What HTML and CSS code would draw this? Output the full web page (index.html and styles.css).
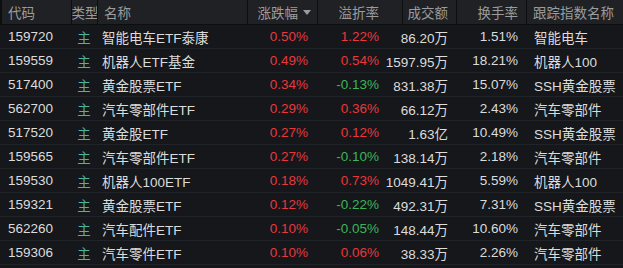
FILE: index.html
```html
<!DOCTYPE html>
<html lang="zh-CN">
<head>
  <meta charset="UTF-8">
  <title>ETF 列表</title>
  <link rel="stylesheet" href="styles.css">
</head>
<body>
<div class="quote-table">
  <div class="row head">
    <div class="cell">代码</div>
    <div class="cell type">类型</div>
    <div class="cell name">名称</div>
    <div class="cell right chg">涨跌幅<span class="sort"></span></div>
    <div class="cell right prem">溢折率</div>
    <div class="cell right">成交额</div>
    <div class="cell right">换手率</div>
    <div class="cell">跟踪指数名称</div>
  </div>
  <div class="row"><div class="cell">159720</div><div class="cell type">主</div><div class="cell name">智能电车ETF泰康</div><div class="cell right chg up">0.50%</div><div class="cell right prem up">1.22%</div><div class="cell right">86.20万</div><div class="cell right">1.51%</div><div class="cell">智能电车</div></div>
  <div class="row"><div class="cell">159559</div><div class="cell type">主</div><div class="cell name">机器人ETF基金</div><div class="cell right chg up">0.49%</div><div class="cell right prem up">0.54%</div><div class="cell right">1597.95万</div><div class="cell right">18.21%</div><div class="cell">机器人100</div></div>
  <div class="row"><div class="cell">517400</div><div class="cell type">主</div><div class="cell name">黄金股票ETF</div><div class="cell right chg up">0.34%</div><div class="cell right prem down">-0.13%</div><div class="cell right">831.38万</div><div class="cell right">15.07%</div><div class="cell">SSH黄金股票</div></div>
  <div class="row"><div class="cell">562700</div><div class="cell type">主</div><div class="cell name">汽车零部件ETF</div><div class="cell right chg up">0.29%</div><div class="cell right prem up">0.36%</div><div class="cell right">66.12万</div><div class="cell right">2.43%</div><div class="cell">汽车零部件</div></div>
  <div class="row"><div class="cell">517520</div><div class="cell type">主</div><div class="cell name">黄金股ETF</div><div class="cell right chg up">0.27%</div><div class="cell right prem up">0.12%</div><div class="cell right">1.63亿</div><div class="cell right">10.49%</div><div class="cell">SSH黄金股票</div></div>
  <div class="row"><div class="cell">159565</div><div class="cell type">主</div><div class="cell name">汽车零部件ETF</div><div class="cell right chg up">0.27%</div><div class="cell right prem down">-0.10%</div><div class="cell right">138.14万</div><div class="cell right">2.18%</div><div class="cell">汽车零部件</div></div>
  <div class="row"><div class="cell">159530</div><div class="cell type">主</div><div class="cell name">机器人100ETF</div><div class="cell right chg up">0.18%</div><div class="cell right prem up">0.73%</div><div class="cell right">1049.41万</div><div class="cell right">5.59%</div><div class="cell">机器人100</div></div>
  <div class="row"><div class="cell">159321</div><div class="cell type">主</div><div class="cell name">黄金股票ETF</div><div class="cell right chg up">0.12%</div><div class="cell right prem down">-0.22%</div><div class="cell right">492.31万</div><div class="cell right">7.31%</div><div class="cell">SSH黄金股票</div></div>
  <div class="row"><div class="cell">562260</div><div class="cell type">主</div><div class="cell name">汽车配件ETF</div><div class="cell right chg up">0.10%</div><div class="cell right prem down">-0.05%</div><div class="cell right">148.44万</div><div class="cell right">10.60%</div><div class="cell">汽车零部件</div></div>
  <div class="row"><div class="cell">159306</div><div class="cell type">主</div><div class="cell name">汽车零件ETF</div><div class="cell right chg up">0.10%</div><div class="cell right prem up">0.06%</div><div class="cell right">38.33万</div><div class="cell right">2.26%</div><div class="cell">汽车零部件</div></div>
</div>
</body>
</html>
```

FILE: styles.css
```css
body {
  margin: 0;
  background-color: #15171b;
  font-family: "Liberation Sans", "Noto Sans CJK SC", sans-serif;
  font-size: 13.5px;
}
.quote-table {
  width: 623px;
}
.row {
  box-sizing: border-box;
  display: grid;
  grid-template-columns: 71px 26px 150px 70px 85px 54px 70px 97px;
  height: 24px;
  border-bottom: 1px solid #202328;
}
.cell {
  display: flex;
  align-items: center;
  min-width: 0;
  padding: 0 8px 0 8px;
  color: #dcdcdc;
  white-space: nowrap;
}
.right { justify-content: flex-end; }

.head {
  height: 25px;
  border-bottom: 1px solid #0d0e10;
  background-color: #1f2125;
}
.head .cell {
  padding-left: 6px;
  color: #9c9c9c;
  border-left: 1px solid #0d0e10;
}
.head .cell:first-child {
  border-left: 2px solid #0d0e10;
}
.head .type { padding: 0 0 0 1px; }
.head .chg { padding-right: 6px; }

.type {
  padding: 0;
  justify-content: center;
  color: #4eb39f;
}
.name { padding-left: 5px; }
.chg { padding-right: 9px; }
.prem { padding-right: 23px; }
.sort {
  margin-left: 5px;
  border-left: 4px solid transparent;
  border-right: 4px solid transparent;
  border-top: 5px solid #9c9c9c;
}
.up { color: #e8383d; }
.down { color: #3bb55a; }
```
